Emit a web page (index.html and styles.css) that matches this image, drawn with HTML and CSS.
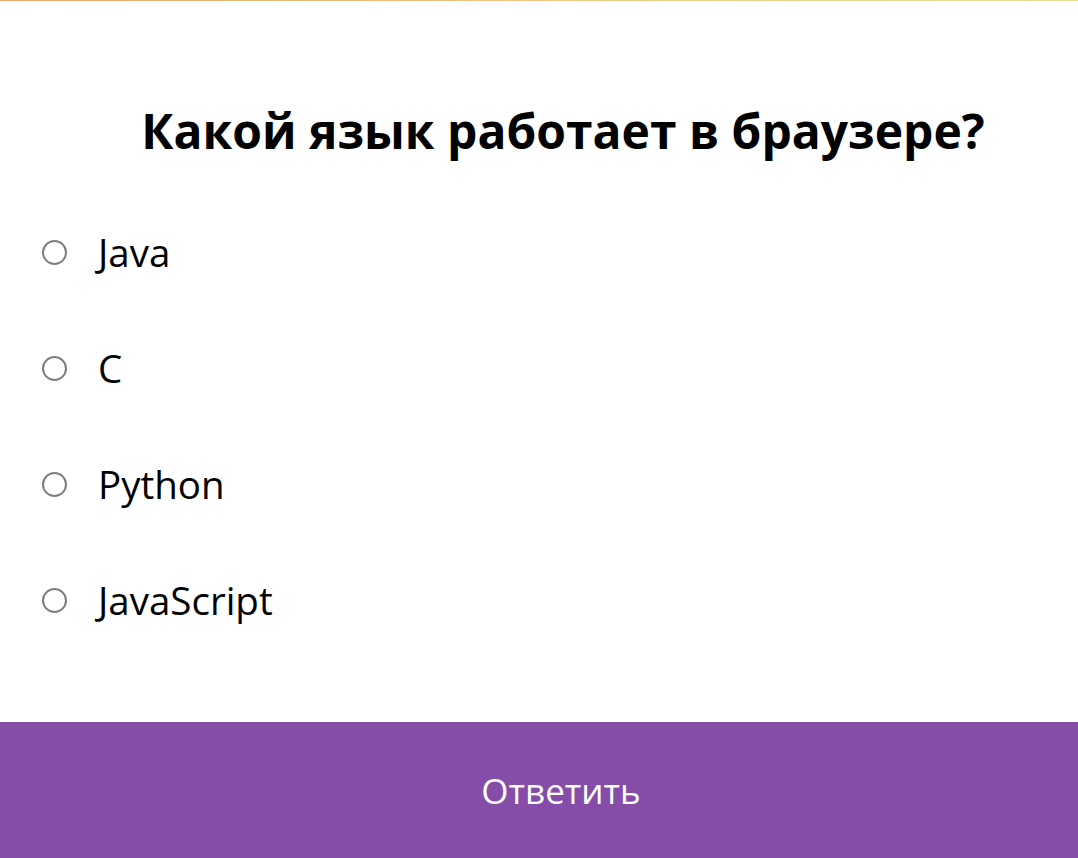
FILE: index.html
```html
<!DOCTYPE html>
<html lang="ru">
<head>
<meta charset="utf-8">
<title>Квиз</title>
<link rel="stylesheet" href="styles.css">
</head>
<body>
<div class="quiz">
  <div class="quiz-header">
    <h2 class="question">Какой язык работает в браузере?</h2>
    <ul class="answers">
      <li class="answer"><input type="radio" name="answer" id="a" class="radio"><label for="a">Java</label></li>
      <li class="answer"><input type="radio" name="answer" id="b" class="radio"><label for="b">C</label></li>
      <li class="answer"><input type="radio" name="answer" id="c" class="radio"><label for="c">Python</label></li>
      <li class="answer"><input type="radio" name="answer" id="d" class="radio"><label for="d">JavaScript</label></li>
    </ul>
  </div>
  <button class="submit">Ответить</button>
</div>
</body>
</html>
```
FILE: styles.css
```css
* { box-sizing: border-box; }
html, body { margin: 0; padding: 0; height: 100%; }
body {
  font-family: "Open Sans", "Noto Sans", sans-serif;
  background: #fff;
  border-top: 1px solid transparent;
  border-image: linear-gradient(to right, #eea86f, #e5e39b) 1;
  border-width: 1px 0 0 0;
}
.quiz {
  display: flex;
  flex-direction: column;
  height: 100%;
}
.quiz-header {
  flex: 1;
}
.question {
  margin: 98px 0 0 0;
  padding-left: 48px;
  text-align: center;
  font-size: 48px;
  font-weight: 700;
  line-height: 64px;
  color: #000;
}
.answers {
  list-style: none;
  margin: 31px 0 0 0;
  padding: 0 0 0 42px;
}
.answer {
  display: flex;
  align-items: center;
  height: 116px;
  font-size: 38.5px;
  color: #000;
}
.radio {
  appearance: none;
  -webkit-appearance: none;
  width: 25px;
  height: 25px;
  margin: 0 31px 0 0;
  border: 2px solid #7d7d7d;
  border-radius: 50%;
  background: #fff;
  flex: none;
}
.submit {
  display: block;
  width: 100%;
  height: 136px;
  border: none;
  margin: 0;
  padding: 0 0 0 44px;
  background: #854da8;
  color: #fff;
  font-family: "Open Sans", "Noto Sans", sans-serif;
  font-size: 35px;
  cursor: pointer;
}
```
